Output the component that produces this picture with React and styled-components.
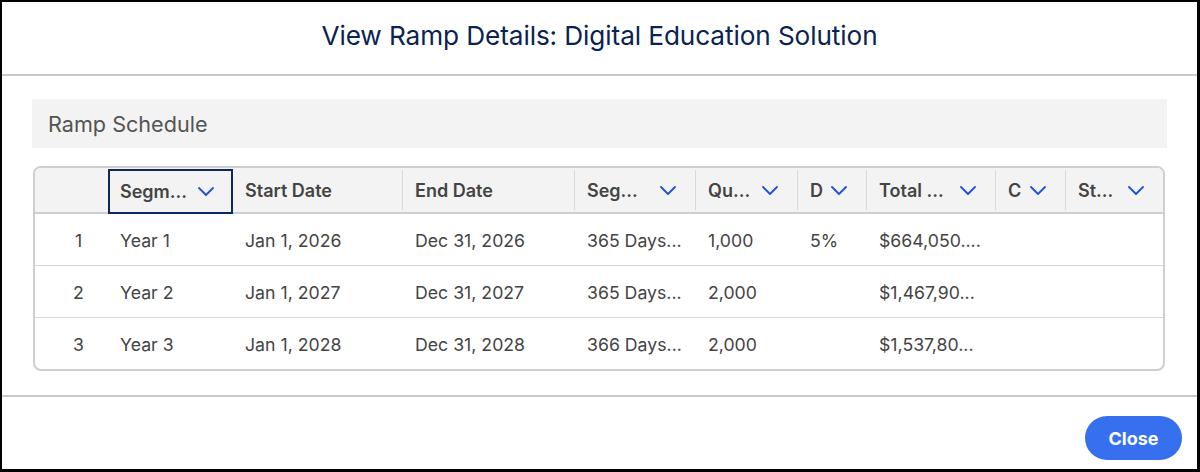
import React from "react";
import styled, { createGlobalStyle } from "styled-components";

const GlobalStyle = createGlobalStyle`
  html, body { margin: 0; padding: 0; background: #fff; }
  body { font-family: Inter, "Noto Sans", "Liberation Sans", sans-serif; }
  * { box-sizing: border-box; }
`;

const COLS = "73px 125px 170px 172px 121px 102px 69px 129px 70px 1fr";

const Frame = styled.div`
  width: 1200px;
  height: 472px;
  border-style: solid;
  border-color: #000;
  border-width: 2px 3px 3px 2px;
  display: flex;
  flex-direction: column;
  background: #fff;
`;

const Header = styled.header`
  height: 74px;
  border-bottom: 2px solid #c9c9c9;
  display: flex;
  align-items: center;
  justify-content: center;
  padding-bottom: 6px;
`;

const Title = styled.h1`
  margin: 0;
  font-size: 26.2px;
  font-weight: 400;
  color: #0a2351;
  letter-spacing: -0.1px;
`;

const Body = styled.main`
  flex: 1;
  padding: 23px 30px 24px 30px;
  display: flex;
  flex-direction: column;
  gap: 18px;
`;

const SectionHeader = styled.div`
  height: 49px;
  background: #f3f3f3;
  display: flex;
  align-items: center;
  padding-left: 16px;
  font-size: 21.6px;
  color: #545454;
`;

const Table = styled.div`
  margin: 0 2px 0 1px;
  border: 2px solid #cfcfcf;
  border-radius: 8px;
  overflow: hidden;
  color: #444;
`;

const HeadRow = styled.div`
  display: grid;
  grid-template-columns: ${COLS};
  height: 46px;
  background: #f3f3f3;
  border-bottom: 2px solid #cfcfcf;
`;

const HeadCell = styled.div`
  display: flex;
  align-items: center;
  justify-content: space-between;
  padding: 0 19px 0 12px;
  font-size: 18px;
  font-weight: 600;
  color: #444;
  white-space: nowrap;
  border-right: ${(p) => (p.$divider ? "1px solid #d9d9d9" : "none")};
  margin: 2px 0;
  outline: ${(p) => (p.$focused ? "2px solid #0b2a5b" : "none")};
  outline-offset: ${(p) => (p.$focused ? "-2px" : "0")};
  ${(p) => (p.$focused ? "margin: 1px 0 -2px 0;" : "")}
`;

const Row = styled.div`
  display: grid;
  grid-template-columns: ${COLS};
  height: ${(p) => (p.$last ? "51px" : "52px")};
  border-bottom: ${(p) => (p.$last ? "none" : "1px solid #d6d6d6")};
`;

const Cell = styled.div`
  display: flex;
  align-items: center;
  padding-left: 12px;
  padding-top: 2px;
  font-size: 17.7px;
  color: #444;
  white-space: nowrap;
`;

const NumCell = styled(Cell)`
  justify-content: center;
  padding-left: 14px;
`;

const Footer = styled.footer`
  border-top: 2px solid #c9c9c9;
  padding: 19px 15px 9px;
  display: flex;
  justify-content: flex-end;
`;

const CloseButton = styled.button`
  width: 97px;
  height: 44px;
  border: none;
  border-radius: 22px;
  background: #3670ee;
  color: #fff;
  font-family: Inter, "Noto Sans", sans-serif;
  font-size: 18px;
  font-weight: 700;
  cursor: pointer;
`;

const Chevron = () => (
  <svg width="16" height="9" viewBox="0 0 16 9" fill="none">
    <path d="M1 1 L8 8 L15 1" stroke="#1f52d6" strokeWidth="1.8" strokeLinecap="round" strokeLinejoin="round" />
  </svg>
);

const columns = [
  { label: "", chevron: false },
  { label: "Segm...", chevron: true, focused: true },
  { label: "Start Date", chevron: false, divider: true },
  { label: "End Date", chevron: false, divider: true },
  { label: "Seg...", chevron: true, divider: true },
  { label: "Qu...", chevron: true, divider: true },
  { label: "D", chevron: true, divider: true },
  { label: "Total ...", chevron: true, divider: true },
  { label: "C", chevron: true, divider: true },
  { label: "St...", chevron: true },
];

const rows = [
  ["1", "Year 1", "Jan 1, 2026", "Dec 31, 2026", "365 Days...", "1,000", "5%", "$664,050....", "", ""],
  ["2", "Year 2", "Jan 1, 2027", "Dec 31, 2027", "365 Days...", "2,000", "", "$1,467,90...", "", ""],
  ["3", "Year 3", "Jan 1, 2028", "Dec 31, 2028", "366 Days...", "2,000", "", "$1,537,80...", "", ""],
];

export default function App() {
  return (
    <>
      <GlobalStyle />
      <Frame>
        <Header>
          <Title>View Ramp Details: Digital Education Solution</Title>
        </Header>
        <Body>
          <SectionHeader>Ramp Schedule</SectionHeader>
          <Table>
            <HeadRow>
              {columns.map((c, i) => (
                <HeadCell key={i} $divider={c.divider} $focused={c.focused}>
                  <span>{c.label}</span>
                  {c.chevron && <Chevron />}
                </HeadCell>
              ))}
            </HeadRow>
            {rows.map((r, ri) => (
              <Row key={ri} $last={ri === rows.length - 1}>
                {r.map((v, ci) =>
                  ci === 0 ? <NumCell key={ci}>{v}</NumCell> : <Cell key={ci}>{v}</Cell>
                )}
              </Row>
            ))}
          </Table>
        </Body>
        <Footer>
          <CloseButton>Close</CloseButton>
        </Footer>
      </Frame>
    </>
  );
}
